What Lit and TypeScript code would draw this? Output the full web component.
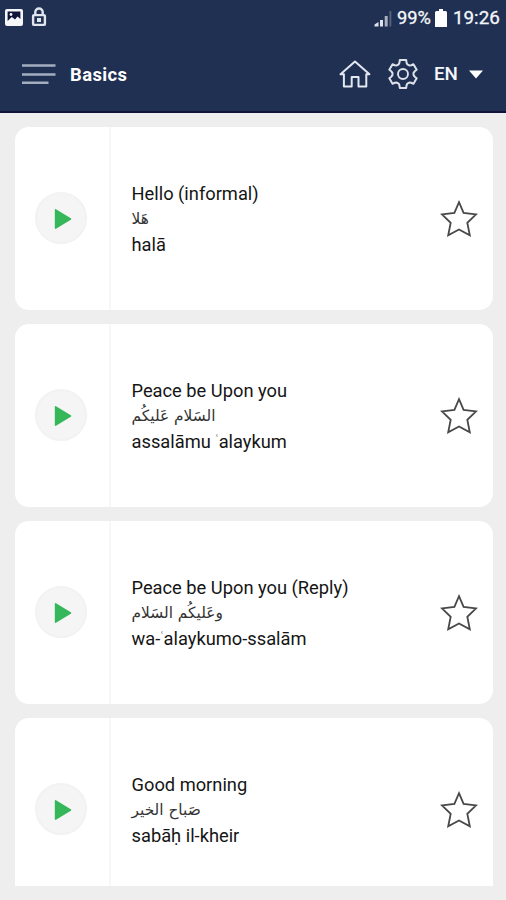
import { LitElement, html, css } from "lit";
import { customElement, property } from "lit/decorators.js";

const gearPath = (() => {
  const pts: string[] = [];
  const rings: [number, number][] = [[-24, 10.6], [-17, 12], [-13, 14.3], [13, 14.3], [17, 12], [24, 10.6]];
  for (let i = 0; i < 6; i++) {
    for (const [a, r] of rings) {
      const t = ((i * 60 + a - 90) * Math.PI) / 180;
      pts.push(`${(16 + r * Math.cos(t)).toFixed(2)} ${(16 + r * Math.sin(t)).toFixed(2)}`);
    }
  }
  return `M${pts.join("L")}Z`;
})();

@customElement("phrase-card")
export class PhraseCard extends LitElement {
  @property() phrase = "";
  @property() arabic = "";
  @property() latin = "";

  static styles = css`
    :host {
      display: flex;
      flex: none;
      height: 183px;
      background: #fff;
      border-radius: 14px;
      overflow: hidden;
    }
    .side {
      box-sizing: border-box;
      width: 96px;
      padding: 0 0 2px 20px;
      border-right: 2px solid #f7f7f7;
      display: flex;
      align-items: center;
    }
    .play {
      box-sizing: border-box;
      width: 52px;
      height: 52px;
      border: 2px solid #f2f2f2;
      border-radius: 50%;
      background: #f5f5f5;
      display: block;
    }
    .text {
      flex: 1;
      padding: 54px 0 0 20.5px;
      color: #151515;
      font-size: 18.3px;
      white-space: nowrap;
    }
    .line { height: 26px; line-height: 26px; }
    .ayn { font-size: 10px; line-height: 0; vertical-align: 5px; }
    .arabic {
      height: 25px;
      line-height: 25px;
      font-family: "DejaVu Sans", sans-serif;
      font-size: 15.4px;
      color: #333;
    }
    .star { width: 40px; height: 40px; margin: 73px 13.5px 0 0; }
  `;

  render() {
    const [head, tail] = this.latin.split("ʿ");
    return html`
      <div class="side">
        <svg class="play" viewBox="0 0 48 48">
          <path d="M18.600 15.900L33.400 25L18.600 34.100Z" fill="#35b75a" stroke="#35b75a" stroke-width="1.600" stroke-linejoin="round" />
        </svg>
      </div>
      <div class="text">
        <div class="line">${this.phrase}</div>
        <div class="arabic">${this.arabic}</div>
        <div class="line">${head}${tail ? html`<span class="ayn">ʿ</span>${tail}` : ""}</div>
      </div>
      <svg class="star" viewBox="0 0 40 40">
        <path d="M20 2.2L24.6 12.8L37 14.4L28.3 22.8L30.8 35.4L20 29.5L9.2 35.4L11.7 22.8L3 14.4L15.4 12.8Z"
          fill="none" stroke="#484848" stroke-width="1.8" />
      </svg>
    `;
  }
}

@customElement("app-root")
export class AppRoot extends LitElement {
  static styles = css`
    :host {
      display: flex;
      flex-direction: column;
      height: 900px;
      background: #eee;
      font-family: Roboto, sans-serif;
      overflow: hidden;
    }
    .header {
      box-sizing: border-box;
      height: 113px;
      background: #203052;
      border-bottom: 2px solid #10143a;
      color: #f4f6fa;
      flex: none;
    }
    .status {
      height: 36px;
      display: flex;
      align-items: center;
      font-size: 19px;
      line-height: 36px;
    }
    .photo { width: 18px; height: 17px; margin: -1px 0 0 5px; }
    .lock { width: 16px; height: 20px; margin: -2px 0 0 8px; }
    .signal { width: 18px; height: 18px; margin: 1px 5px 0 auto; }
    .percent { width: 34px; font-size: 18.3px; -webkit-text-stroke: 0.3px; }
    .battery { width: 12px; height: 18px; margin: -1px 6px 0 4px; }
    .time { width: 53px; font-size: 18.8px; -webkit-text-stroke: 0.3px; }
    .bar { height: 76px; display: flex; align-items: center; }
    .menu { width: 34px; height: 24px; margin: 0 0 0 22px; }
    .title { margin-left: 14px; font-size: 18.4px; letter-spacing: 0.4px; font-weight: 700; flex: 1; color: #fff; }
    .home { width: 32px; height: 28px; }
    .gear { width: 32px; height: 32px; margin: -1px 0 0 16px; }
    .lang { margin-left: 15px; width: 25px; font-size: 18.8px; font-weight: 500; }
    .caret { width: 14px; height: 9px; margin: 0 23px 0 10px; }
    .list {
      box-sizing: border-box;
      height: 773px;
      padding: 14px 13.5px 0 15px;
      display: flex;
      flex-direction: column;
      gap: 14px;
      overflow: hidden;
    }
  `;

  private phrases = [
    { phrase: "Hello (informal)", arabic: "هَلا", latin: "halā" },
    { phrase: "Peace be Upon you", arabic: "السَلام عَليكُم", latin: "assalāmu ʿalaykum" },
    { phrase: "Peace be Upon you (Reply)", arabic: "وعَليكُم السَلام", latin: "wa-ʿalaykumo-ssalām" },
    { phrase: "Good morning", arabic: "صَباح الخير", latin: "sabāḥ il-kheir" },
  ];

  render() {
    return html`
      <div class="header">
        <div class="status">
          <svg class="photo" viewBox="0 0 18 17">
            <rect width="18" height="17" rx="2" fill="#f4f6fa" />
            <path d="M2.6 2.6H15.4V10L12.5 7.5L10 10.4L6.8 8L2.6 12Z" fill="#10143a" />
            <circle cx="6" cy="5.5" r="1.4" fill="#f4f6fa" />
          </svg>
          <svg class="lock" viewBox="0 0 16 20">
            <path d="M4.3 8V5.2a3.7 3.7 0 0 1 7.4 0V8" fill="none" stroke="#e1e5ed" stroke-width="2.4" />
            <rect x="2.1" y="8.1" width="11.8" height="9.8" rx="1" fill="none" stroke="#e1e5ed" stroke-width="2.4" />
            <rect x="6" y="11" width="4" height="4" fill="#e1e5ed" />
          </svg>
          <svg class="signal" viewBox="0 0 18 18">
            <path d="M0.500 16.500V14.500l4-2.500v4.500ZM6 10h3v6.500H6Z" fill="#dfe3ec" />
            <path d="M10.700 6h3v10.500h-3Z" fill="#a9b0c0" />
            <path d="M15.500 1h1.800v15.500h-1.800Z" fill="#59647e" />
          </svg>
          <span class="percent">99%</span>
          <svg class="battery" viewBox="0 0 12 18">
            <path d="M4 0h4v2h2.500q1.500 0 1.500 1.500V18H0V3.500Q0 2 1.500 2H4Z" fill="#fff" />
          </svg>
          <span class="time">19:26</span>
        </div>
        <div class="bar">
          <svg class="menu" viewBox="0 0 34 24">
            <path d="M0 3.500H33.500M0 12.500H33.500M0 20.700H26.500" stroke="#a3adc0" stroke-width="2.600" />
          </svg>
          <span class="title">Basics</span>
          <svg class="home" viewBox="0 0 32 28">
            <path d="M1.500 14.200L16 1.500L30.500 14.200H27.300V26.500H19.500V17H12.700V26.500H4.900V14.200Z"
              fill="none" stroke="#e3e7ef" stroke-width="2" stroke-linejoin="round" />
          </svg>
          <svg class="gear" viewBox="0 0 32 32">
            <path d=${gearPath} fill="none" stroke="#dce1ea" stroke-width="2" stroke-linejoin="round" />
            <circle cx="16" cy="16" r="5" fill="none" stroke="#dce1ea" stroke-width="1.900" />
          </svg>
          <span class="lang">EN</span>
          <svg class="caret" viewBox="0 0 14 9"><path d="M0 0.500H14L7 8.500Z" fill="#fff" /></svg>
        </div>
      </div>
      <div class="list">
        ${this.phrases.map(
          (p) => html`<phrase-card .phrase=${p.phrase} .arabic=${p.arabic} .latin=${p.latin}></phrase-card>`
        )}
      </div>
    `;
  }
}
